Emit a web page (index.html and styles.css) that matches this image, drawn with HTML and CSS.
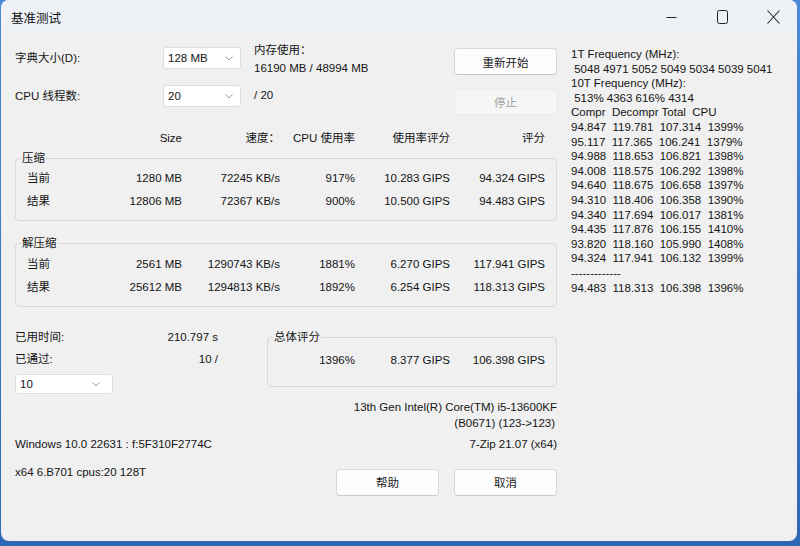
FILE: index.html
```html
<!DOCTYPE html>
<html lang="zh-CN">
<head>
<meta charset="utf-8">
<title>基准测试</title>
<link rel="stylesheet" href="styles.css">
</head>
<body>
<div class="window">
  <div class="titlebar">
    <span class="title">基准测试</span>
    <div class="controls">
      <span class="ctl"><svg width="11" height="12" viewBox="0 0 11 12"><path d="M0.5 6.5H10.5" stroke="#222" stroke-width="1"/></svg></span>
      <span class="ctl"><svg width="11" height="14" viewBox="0 0 11 14"><rect x="0.5" y="0.5" width="10" height="13" rx="1.8" fill="none" stroke="#222" stroke-width="1"/></svg></span>
      <span class="ctl"><svg width="13" height="14" viewBox="0 0 13 14"><path d="M0.5 0.5L12.5 13.5M12.5 0.5L0.5 13.5" stroke="#222" stroke-width="1.05"/></svg></span>
    </div>
  </div>
  <div class="content">
    <div class="main">
      <div class="top">
        <div class="col-labels">
          <div>字典大小(D):</div>
          <div>CPU 线程数:</div>
        </div>
        <div class="col-selects">
          <div class="select"><span>128 MB</span><svg width="8" height="5" viewBox="0 0 8 5"><path d="M0.5 0.5L4 4L7.5 0.5" fill="none" stroke="#999" stroke-width="1"/></svg></div>
          <div class="select"><span>20</span><svg width="8" height="5" viewBox="0 0 8 5"><path d="M0.5 0.5L4 4L7.5 0.5" fill="none" stroke="#999" stroke-width="1"/></svg></div>
        </div>
        <div class="col-info">
          <div>内存使用：</div>
          <div>16190 MB / 48994 MB</div>
          <div class="threads">/ 20</div>
        </div>
        <div class="col-btns">
          <div class="btn">重新开始</div>
          <div class="btn disabled">停止</div>
        </div>
      </div>

      <div class="grid head">
        <span></span><span>Size</span><span>速度：</span><span>CPU 使用率</span><span>使用率评分</span><span>评分</span>
      </div>

      <fieldset class="group first">
        <legend>压缩</legend>
        <div class="grid rows">
          <span>当前</span><span>1280 MB</span><span>72245 KB/s</span><span>917%</span><span>10.283 GIPS</span><span>94.324 GIPS</span>
          <span>结果</span><span>12806 MB</span><span>72367 KB/s</span><span>900%</span><span>10.500 GIPS</span><span>94.483 GIPS</span>
        </div>
      </fieldset>

      <fieldset class="group second">
        <legend>解压缩</legend>
        <div class="grid rows">
          <span>当前</span><span>2561 MB</span><span>1290743 KB/s</span><span>1881%</span><span>6.270 GIPS</span><span>117.941 GIPS</span>
          <span>结果</span><span>25612 MB</span><span>1294813 KB/s</span><span>1892%</span><span>6.254 GIPS</span><span>118.313 GIPS</span>
        </div>
      </fieldset>

      <div class="bottom">
        <div class="stats">
          <div class="stat"><span>已用时间:</span><span>210.797 s</span></div>
          <div class="stat"><span>已通过:</span><span>10 /</span></div>
          <div class="select small"><span>10</span><svg width="8" height="5" viewBox="0 0 8 5"><path d="M0.5 0.5L4 4L7.5 0.5" fill="none" stroke="#999" stroke-width="1"/></svg></div>
        </div>
        <fieldset class="group total">
          <legend>总体评分</legend>
          <div class="grid totals">
            <span>1396%</span><span>8.377 GIPS</span><span>106.398 GIPS</span>
          </div>
        </fieldset>
      </div>

      <div class="cpu">
        <div>13th Gen Intel(R) Core(TM) i5-13600KF</div>
        <div class="cpu2">(B0671) (123-&gt;123)</div>
      </div>
      <div class="sysrow">
        <span>Windows 10.0 22631 :  f:5F310F2774C</span>
        <span>7-Zip 21.07 (x64)</span>
      </div>
      <div class="lastrow">
        <span>x64 6.B701 cpus:20 128T</span>
        <div class="bottom-btns">
          <div class="btn">帮助</div>
          <div class="btn">取消</div>
        </div>
      </div>
    </div>
    <pre class="log">1T Frequency (MHz):
 5048 4971 5052 5049 5034 5039 5041
10T Frequency (MHz):
 513% 4363 616% 4314
Compr  Decompr Total  CPU
94.847  119.781  107.314  1399%
95.117  117.365  106.241  1379%
94.988  118.653  106.821  1398%
94.008  118.575  106.292  1398%
94.640  118.675  106.658  1397%
94.310  118.406  106.358  1390%
94.340  117.694  106.017  1381%
94.435  117.876  106.155  1410%
93.820  118.160  105.990  1408%
94.324  117.941  106.132  1399%
-------------
94.483  118.313  106.398  1396%</pre>
  </div>
</div>
</body>
</html>
```
FILE: styles.css
```css
* { box-sizing: border-box; }
html, body { margin: 0; padding: 0; }
body {
  width: 800px;
  height: 546px;
  overflow: hidden;
  background: linear-gradient(180deg, #4a8ad6 0%, #2c68b8 100%);
  font-family: "Liberation Sans", "Noto Sans CJK SC", sans-serif;
  font-size: 11.5px;
  color: #141414;
}
.window {
  margin: 0 3px 0 1px;
  height: 541px;
  background: #f0f0f0;
  border-radius: 8px;
  overflow: hidden;
}
.titlebar {
  height: 34px;
  display: flex;
  align-items: center;
  background: #eef2f7;
  padding-left: 10px;
}
.title { flex: 1; font-size: 12.5px; color: #111; }
.controls { display: flex; height: 34px; margin-right: -2px; }
.ctl { width: 51px; display: flex; align-items: center; justify-content: center; }

.content { display: flex; }
.main { width: 542px; margin-left: 14px; flex: none; }
.log {
  margin: 0 0 0 14px;
  padding-top: 13px;
  font-family: "Liberation Sans", sans-serif;
  font-size: 11.5px;
  line-height: 14.6px;
  white-space: pre;
  color: #141414;
}

.top { display: flex; margin-top: 13px; }
.col-labels, .col-selects { display: flex; flex-direction: column; gap: 16px; }
.col-labels { width: 148px; }
.col-labels div { height: 22px; line-height: 22px; }
.col-selects { width: 78px; }
.col-info { width: 200px; margin-left: 13px; margin-top: -6px; line-height: 18px; }
.col-info .threads { margin-top: 9px; }
.col-btns { width: 103px; margin-top: 1px; display: flex; flex-direction: column; gap: 14px; }

.select {
  height: 22px;
  background: #fff;
  border: 1px solid #dedede;
  border-radius: 3px;
  display: flex;
  align-items: center;
  justify-content: space-between;
  padding: 0 7px 0 4px;
}
.select.small { width: 98px; height: 20px; margin-top: 4px; padding-right: 12px; }

.btn {
  height: 27px;
  background: #fdfdfd;
  border: 1px solid #d9d9d9;
  border-bottom-color: #c8c8c8;
  border-radius: 4px;
  display: flex;
  align-items: center;
  justify-content: center;
  color: #1a1a1a;
}
.btn.disabled {
  height: 26px;
  background: #f6f6f6;
  border-color: #ececec;
  color: #a3a3a3;
}

.grid {
  display: grid;
  grid-template-columns: 75px 80px 98px 75px 95px 95px;
}
.grid span { text-align: right; white-space: nowrap; }
.grid span:nth-child(6n+1) { text-align: left; }
.head { margin-top: 14px; padding-left: 12px; line-height: 18px; }
.rows { padding-left: 11px; line-height: 23px; }

.group {
  margin: 0;
  padding: 0 0 7px 0;
  border: 1px solid #d8d8d8;
  border-radius: 4px;
  min-inline-size: auto;
}
.group legend {
  padding: 0 1px;
  margin-left: 5px;
  line-height: 18px;
}
.group.first { margin-top: 2px; }
.group.second { margin-top: 13px; }
.group.second .rows { padding-top: 1px; }

.bottom { display: flex; margin-top: 19px; align-items: flex-start; }
.stats { width: 203px; }
.stat { display: flex; justify-content: space-between; line-height: 22px; }
.total { width: 290px; margin-left: 49px; margin-top: 2px; padding-bottom: 15px; }
.totals { grid-template-columns: 87px 95px 95px; line-height: 22px; padding-top: 3px; }
.totals span:nth-child(6n+1) { text-align: right; }

.cpu { margin-top: 5px; text-align: right; line-height: 16px; }
.cpu2 { padding-right: 2px; }
.sysrow { display: flex; justify-content: space-between; line-height: 18px; margin-top: 4px; }
.lastrow { display: flex; justify-content: space-between; align-items: flex-start; line-height: 18px; margin-top: 10px; }
.bottom-btns { display: flex; gap: 15px; margin-top: 6px; }
.bottom-btns .btn { width: 103px; }
```
